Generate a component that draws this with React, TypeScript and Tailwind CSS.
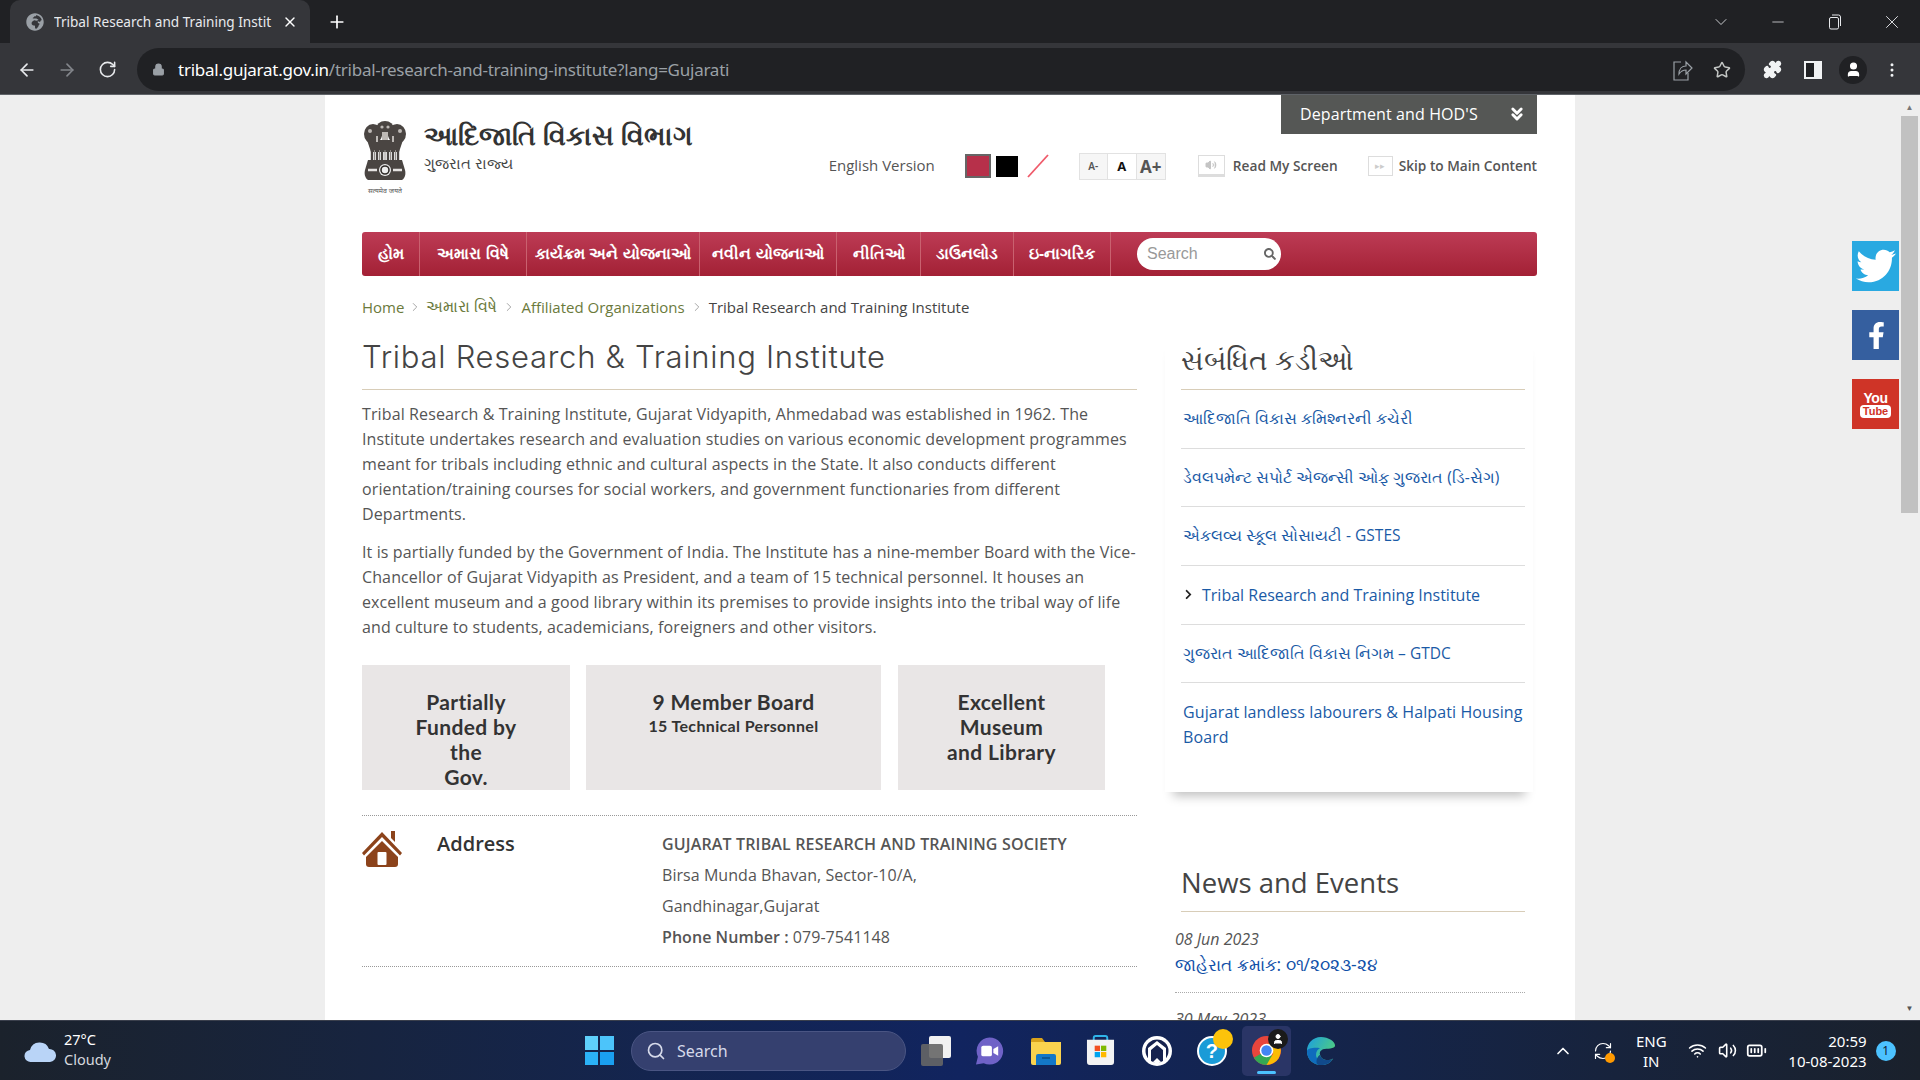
import React from "react";
import { ArrowLeft, ArrowRight, RotateCw, Lock, Star, Puzzle, MoreVertical, User, ChevronDown, Minus, X, Plus, Search, ChevronsDown, ChevronRight, Wifi, Volume2, BatteryFull, ChevronUp, RefreshCw } from "lucide-react";
import { FaTwitter, FaFacebookF, FaSearch, FaChevronRight, FaGlobeAfrica } from "react-icons/fa";

const navItems: [string, string][] = [
  ["હોમ", "w-[58px]"],
  ["અમારા વિષે", "w-[107px]"],
  ["કાર્યક્રમ અને યોજનાઓ", "w-[173px]"],
  ["નવીન યોજનાઓ", "w-[137px]"],
  ["નીતિઓ", "w-[84px]"],
  ["ડાઉનલોડ", "w-[93px]"],
  ["ઇ-નાગરિક", "w-[97px]"],
];

function Emblem() {
  return (
    <div className="w-[46px] h-[78px] flex flex-col items-center">
      <svg viewBox="0 0 46 66" className="w-[46px] h-[66px]">
        <g fill="#4a4542">
          <ellipse cx="11" cy="14" rx="9" ry="10" />
          <ellipse cx="35" cy="14" rx="9" ry="10" />
          <ellipse cx="23" cy="9" rx="9" ry="8" />
          <path d="M5 20h36l-4 12H9z" />
          <path d="M6 40h34l3 10c1 4 0 8-3 10H6c-3-2-4-6-3-10z" />
        </g>
        <g fill="#bdb9b5">
          <circle cx="8" cy="11" r="2" />
          <circle cx="38" cy="11" r="2" />
          <circle cx="20" cy="7" r="1.6" />
          <circle cx="26" cy="7" r="1.6" />
          <path d="M14 16h2v6h-2zM30 16h2v6h-2zM20 12h6v8h-6z" />
        </g>
        <g stroke="#4a4542" strokeWidth="2.4">
          <path d="M10 30v11M15 30v11M20 30v11M26 30v11M31 30v11M36 30v11" />
        </g>
        <g stroke="#8f8a86" strokeWidth="1">
          <path d="M12.5 30v10M17.5 30v10M23 30v10M28.5 30v10M33.5 30v10" />
        </g>
        <circle cx="23" cy="50" r="6" fill="#eee" />
        <circle cx="23" cy="50" r="4" fill="none" stroke="#2f2b28" strokeWidth="1.6" />
        <path d="M6 50h9M31 50h9" stroke="#e6e4e2" strokeWidth="2.4" />
      </svg>
      <div className="text-[7px] leading-[10px] text-[#555] whitespace-nowrap font-['Noto_Sans',sans-serif]">सत्यमेव जयते</div>
    </div>
  );
}

function Win11() {
  return (
    <div className="grid grid-cols-2 gap-[2px] w-[29px] h-[29px]">
      <div className="bg-[#5fd0fb]" />
      <div className="bg-[#4cc4fa]" />
      <div className="bg-[#2bb2f7]" />
      <div className="bg-[#1a9ff0]" />
    </div>
  );
}

function Chrome() {
  return (
    <svg viewBox="0 0 32 32" className="w-[31px] h-[31px]">
      <circle cx="16" cy="16" r="15" fill="#e8453c" />
      <path d="M16 16 3 23.5A15 15 0 0 0 16 31l7-8z" fill="#34a853" />
      <path d="M16 9h13a15 15 0 0 1-13 22l7-12z" fill="#fbbc05" />
      <circle cx="16" cy="16" r="7" fill="#fff" />
      <circle cx="16" cy="16" r="5.4" fill="#4285f4" />
    </svg>
  );
}

function Edge() {
  return (
    <svg viewBox="0 0 32 32" className="w-[30px] h-[30px]">
      <defs>
        <linearGradient id="edgeA" x1="0" y1="0" x2="1" y2="0.6">
          <stop offset="0" stopColor="#1b9de2" />
          <stop offset="1" stopColor="#52d17a" />
        </linearGradient>
      </defs>
      <path d="M16 1C7 1 1 8 1 16c0 9 7 15 15 15 6 0 11-3 13-7-5 3-13 2-14-4-1-3 1-5 3-6 4-1 13 0 13-4C31 6 24 1 16 1z" fill="url(#edgeA)" />
      <path d="M1 16c0 9 7 15 15 15 4 0 8-1 11-4-6 2-14 1-16-5-1-4 1-8 4-9-6-1-13 0-14 3z" fill="#0f6cbd" />
      <path d="M15 20c1 6 9 7 14 4-2 4-7 7-13 7-2 0-3 0-4-1-2-3 0-8 3-10z" fill="#114a8b" />
    </svg>
  );
}

function Meet() {
  return (
    <svg viewBox="0 0 30 30" className="w-[29px] h-[30px]">
      <path d="M15 1a14 14 0 1 1-6 26.6L1 29l2-8A14 14 0 0 1 15 1z" fill="#6f62c7" />
      <rect x="6.5" y="9.5" width="11" height="11" rx="2" fill="#fff" />
      <path d="m19 13 5-3v10l-5-3z" fill="#fff" />
    </svg>
  );
}

function Folder() {
  return (
    <svg viewBox="0 0 30 28" className="w-[30px] h-[28px]">
      <path d="M0 3a2 2 0 0 1 2-2h9l3 4H0z" fill="#d9a21b" />
      <path d="M0 5h30v21a2 2 0 0 1-2 2H2a2 2 0 0 1-2-2z" fill="#fbd34e" />
      <path d="M5 19a2 2 0 0 1 2-2h16a2 2 0 0 1 2 2v9H5z" fill="#1478c8" />
      <path d="M11 21h8" stroke="#0b4f8a" strokeWidth="1.5" />
    </svg>
  );
}

function Store() {
  return (
    <svg viewBox="0 0 30 32" className="w-[29px] h-[31px]">
      <path d="M8 7V3a2 2 0 0 1 2-2h10a2 2 0 0 1 2 2v4" fill="none" stroke="#2fb4e9" strokeWidth="2" />
      <path d="M1 5h28v23a3 3 0 0 1-3 3H4a3 3 0 0 1-3-3z" fill="#f3f3f3" />
      <rect x="9" y="11" width="5.5" height="5.5" fill="#f25022" />
      <rect x="15.5" y="11" width="5.5" height="5.5" fill="#7fba00" />
      <rect x="9" y="17.5" width="5.5" height="5.5" fill="#00a4ef" />
      <rect x="15.5" y="17.5" width="5.5" height="5.5" fill="#ffb900" />
    </svg>
  );
}

function HouseApp() {
  return (
    <svg viewBox="0 0 30 30" className="w-[30px] h-[30px]">
      <circle cx="15" cy="15" r="15" fill="#fff" />
      <circle cx="15" cy="15" r="11.5" fill="#16224f" />
      <path d="M6 12 15 5l9 7v13l-3 1V14l-6-5-6 5v12l-3-1z" fill="#fff" />
      <path d="m11 26 4-4 4 4-4 2z" fill="#fff" />
    </svg>
  );
}

function Help() {
  return (
    <div className="relative w-[30px] h-[30px]">
      <svg viewBox="0 0 30 30" className="w-[30px] h-[30px]">
        <circle cx="15" cy="15" r="14" fill="#1a9bd7" stroke="#fff" strokeWidth="2" />
      </svg>
      <span className="absolute inset-0 flex items-center justify-center text-white font-bold text-[20px] font-['Liberation_Sans',sans-serif]">?</span>
      <div className="absolute -right-[6px] -top-[7px] w-[20px] h-[20px] rounded-full bg-[#fcc30b]" />
    </div>
  );
}

function House() {
  return (
    <svg viewBox="0 0 40 38" className="w-[40px] h-[38px] shrink-0">
      <path d="M29 2h4v11l-4-4z" fill="#8c431b" />
      <path d="M20 3 0 24l2 2.5L20 8l18 18.5 2-2.5z" fill="#8c431b" />
      <path d="M20 12 4 28v7a3 3 0 0 0 3 3h26a3 3 0 0 0 3-3v-7z" fill="#8c431b" />
      <rect x="15.5" y="23" width="9" height="13" rx="1" fill="#fff" />
    </svg>
  );
}

export default function App() {
  return (
    <div className="h-screen w-full overflow-hidden flex flex-col bg-[#eeeeee] font-['Open_Sans','Noto_Sans',sans-serif] text-[#555]">
      {/* tab strip */}
      <div className="h-[43px] bg-[#202124] flex items-end shrink-0 text-white">
        <div className="ml-[10px] w-[300px] h-[43px] bg-[#35363a] rounded-t-[10px] flex items-center pl-[16px] pr-[12px]">
          <FaGlobeAfrica size={18} className="text-[#9aa0a6] shrink-0" />
          <span className="ml-[10px] text-[13.6px] leading-[20px] text-[#e8eaed] whitespace-nowrap overflow-hidden w-[219px] font-['Noto_Sans',sans-serif]">Tribal Research and Training Instit</span>
          <X size={16} className="ml-auto text-white" />
        </div>
        <div className="ml-[17px] h-[43px] flex items-center"><Plus size={20} /></div>
        <div className="ml-auto h-[43px] flex items-center text-[#e8eaed] -mt-[3px]">
          <div className="w-[57px] flex justify-center"><ChevronDown size={20} strokeWidth={1} /></div>
          <div className="w-[57px] flex justify-center"><Minus size={18} strokeWidth={1} /></div>
          <div className="w-[57px] flex justify-center">
            <svg width="14" height="16" viewBox="0 0 14 16" fill="none" stroke="currentColor"><rect x="1.5" y="3.5" width="9" height="11.5" rx="1.5" /><path d="M4 1h6.5a2 2 0 0 1 2 2v9" /></svg>
          </div>
          <div className="w-[57px] flex justify-center"><X size={22} strokeWidth={1} /></div>
        </div>
      </div>
      {/* toolbar */}
      <div className="h-[52px] bg-[#35363a] shrink-0 flex items-center border-b border-[#5f6368] pt-[2px]">
        <ArrowLeft size={20} className="ml-[17px] text-[#e8eaed]" />
        <ArrowRight size={20} className="ml-[20px] text-[#83868b]" />
        <RotateCw size={19} className="ml-[21px] text-[#e8eaed]" />
        <div className="ml-[20px] w-[1608px] h-[43px] rounded-full bg-[#202124] flex items-center pl-[15px] pr-[14px]">
          <Lock size={13} fill="#9aa0a6" className="text-[#9aa0a6]" />
          <span className="ml-[13px] text-[17px] tracking-[-0.25px] whitespace-nowrap font-['Noto_Sans',sans-serif] text-white">tribal.gujarat.gov.in<span className="text-[#9aa0a6]">/tribal-research-and-training-institute?lang=Gujarati</span></span>
          <svg width="20" height="22" viewBox="0 0 20 22" fill="none" stroke="#9aa0a6" strokeWidth="1.2" className="ml-auto mr-[20px]">
            <path d="M8 3H1v18h14v-7" />
            <path d="M6 15c0-5 3-8 7-8V3l6 6-6 6v-4c-3 0-5 1-7 4z" />
          </svg>
          <Star size={18} className="text-[#c4c7c5]" />
        </div>
        <Puzzle size={19} fill="#f1f3f4" className="ml-[18px] text-[#f1f3f4]" />
        <div className="ml-[22px] w-[18px] h-[18px] border-2 border-r-[8px] border-[#f1f3f4] bg-[#202124]" />
        <div className="ml-[17px] w-[28px] h-[28px] rounded-full bg-[#202124] flex items-center justify-center"><User size={17} fill="#fff" className="text-white" /></div>
        <MoreVertical size={18} className="ml-[16px] text-[#f1f3f4]" />
      </div>

      {/* viewport */}
      <div className="flex-1 min-h-0 flex relative overflow-hidden">
        <div className="w-[325px] shrink-0" />
        <div className="w-[1250px] shrink-0 bg-white pl-[37px] pr-[38px] overflow-hidden">
          {/* header */}
          <div className="h-[137px] flex">
            <div className="pt-[25px]"><Emblem /></div>
            <div className="ml-[16px] pt-[21px]">
              <div className="text-[27.3px] font-bold leading-[38px] text-[#333]">આદિજાતિ વિકાસ વિભાગ</div>
              <div className="text-[15px] leading-[18px] text-[#444]">ગુજરાત રાજ્ય</div>
            </div>
            <div className="ml-auto flex flex-col items-end">
              <div className="w-[256px] h-[39px] bg-[#555755] flex items-center pl-[19px] pr-[10px] text-white text-[16px] tracking-[0.1px] pb-[2px]">
                Department and HOD'S
                <ChevronsDown size={20} strokeWidth={3.5} className="ml-auto" />
              </div>
              <div className="mt-[18px] flex items-center h-[28px] text-[14px]">
                <span className="text-[15px] -mt-[1px] mr-[-1px]">English Version</span>
                <div className="ml-[31px] w-[26px] h-[24px] bg-[#b7304a] border-2 border-[#666]" />
                <div className="ml-[5px] w-[22px] h-[21px] bg-black" />
                <svg width="24" height="24" viewBox="0 0 24 24" className="ml-[8px]"><path d="M2 23 22 1" stroke="#ef5a6a" strokeWidth="1.8" /></svg>
                <div className="ml-[29px] flex items-stretch h-[27px] border border-[#e2e2e2] font-['Noto_Sans',sans-serif] divide-x divide-[#e2e2e2]">
                  <span className="w-[28px] text-center text-[10px] font-semibold bg-[#f6f6f6] leading-[25px]">A-</span>
                  <span className="w-[29px] text-center text-[13px] font-bold text-[#111] leading-[25px]">A</span>
                  <span className="w-[28px] text-center text-[17px] font-bold bg-[#f6f6f6] leading-[25px]">A+</span>
                </div>
                <div className="ml-[32px] w-[27px] h-[22px] border border-[#ddd] border-b-[3px] flex items-center justify-center text-[#c4c4c4]"><Volume2 size={12} fill="#c4c4c4" /></div>
                <span className="ml-[8px] font-semibold text-[13.7px]">Read My Screen</span>
                <div className="ml-[30px] w-[25px] h-[20px] border border-[#ddd] text-[#ccc] text-[9px] flex items-center justify-center">▸▸</div>
                <span className="ml-[6px] font-semibold text-[13.7px]">Skip to Main Content</span>
              </div>
            </div>
          </div>
          {/* nav */}
          <div className="h-[44px] rounded-[3px] bg-gradient-to-b from-[#bd3b55] to-[#a32035] flex items-center text-white font-bold text-[15.5px]">
            {navItems.map(([n, w]) => (
              <div key={n} className={`${w} h-full flex items-center justify-center border-r border-[#c9616f] whitespace-nowrap`}>{n}</div>
            ))}
            <div className="ml-[26px] w-[144px] h-[32px] rounded-full bg-white flex items-center pl-[10px] pr-[5px] font-normal text-[16px] text-[#999] font-['Liberation_Sans',sans-serif]">
              Search
              <FaSearch size={12} className="ml-auto text-[#666]" />
            </div>
          </div>
          {/* breadcrumb */}
          <div className="mt-[19px] h-[24px] flex items-center text-[15px] text-[#6b7a3c]">
            <span>Home</span><ChevronRight size={14} strokeWidth={1.5} className="mx-[4px] text-[#999]" />
            <span className="text-[15.5px]">અમારા વિષે</span><ChevronRight size={14} strokeWidth={1.5} className="mx-[5px] text-[#999]" />
            <span>Affiliated Organizations</span><ChevronRight size={14} strokeWidth={1.5} className="mx-[5px] text-[#999]" />
            <span className="text-[#444]">Tribal Research and Training Institute</span>
          </div>
          <div className="flex mt-[19px]">
            {/* main */}
            <div className="w-[775px] shrink-0">
              <h1 className="h-[52px] border-b border-[#d8cdb8] text-[31px] leading-[38px] text-[#444] font-['Inter',sans-serif] font-light tracking-[0.72px]">Tribal Research &amp; Training Institute</h1>
              <div className="mt-[12px] text-[16px] leading-[25px] tracking-[0.115px]">
                <p className="mb-[13px]">Tribal Research &amp; Training Institute, Gujarat Vidyapith, Ahmedabad was established in 1962. The Institute undertakes research and evaluation studies on various economic development programmes meant for tribals including ethnic and cultural aspects in the State. It also conducts different orientation/training courses for social workers, and government functionaries from different Departments.</p>
                <p>It is partially funded by the Government of India. The Institute has a nine-member Board with the Vice-Chancellor of Gujarat Vidyapith as President, and a team of 15 technical personnel. It houses an excellent museum and a good library within its premises to provide insights into the tribal way of life and culture to students, academicians, foreigners and other visitors.</p>
              </div>
              <div className="mt-[25px] flex h-[125px] text-center text-[#333] font-['Lato',sans-serif] font-bold text-[21px] tracking-[0.35px] leading-[25px]">
                <div className="w-[208px] bg-[#e9e6e6] pt-[24px]">Partially<br />Funded by<br />the<br />Gov.</div>
                <div className="ml-[16px] w-[295px] bg-[#e9e6e6] pt-[24px]">9 Member Board<div className="text-[16px] leading-[23px]">15 Technical Personnel</div></div>
                <div className="ml-[17px] w-[207px] bg-[#e9e6e6] pt-[24px]">Excellent<br />Museum<br />and Library</div>
              </div>
              <div className="mt-[25px] border-t border-b border-dotted border-[#999] h-[152px] flex pt-[13px]">
                <House />
                <div className="ml-[35px] w-[225px] text-[20px] font-semibold text-[#333] leading-[28px] mt-[1px]">Address</div>
                <div className="text-[16px] leading-[31px] tracking-[0.05px]">
                  <div className="font-semibold tracking-[0.15px]">GUJARAT TRIBAL RESEARCH AND TRAINING SOCIETY</div>
                  <div>Birsa Munda Bhavan, Sector-10/A,</div>
                  <div>Gandhinagar,Gujarat</div>
                  <div><span className="font-semibold">Phone Number :</span> 079-7541148</div>
                </div>
              </div>
            </div>
            {/* sidebar */}
            <div className="ml-[28px] w-[368px] shrink-0 -mt-[3px]">
              <div className="pl-[16px] pr-[8px] pb-[42px] shadow-[0_12px_10px_-8px_rgba(0,0,0,0.25)]">
                <div className="h-[55px] border-b border-[#d8cdb8] text-[28px] leading-[48px] text-[#444]">સંબંધિત કડીઓ</div>
                <div className="text-[15.5px] text-[#1a5aa6]">
                  {["આદિજાતિ વિકાસ કમિશ્નરની કચેરી", "ડેવલપમેન્ટ સપોર્ટ એજન્સી ઓફ ગુજરાત (ડિ-સેગ)", "એકલવ્ય સ્કૂલ સોસાયટી - GSTES"].map((t) => (
                    <div key={t} className="h-[58.5px] flex items-center border-b border-[#ddd] pl-[2px] whitespace-nowrap">{t}</div>
                  ))}
                  <div className="h-[59px] flex items-center border-b border-[#ddd] pl-[2px] text-[16px]"><FaChevronRight size={11} className="text-[#222] mr-[8px]" />Tribal Research and Training Institute</div>
                  <div className="h-[58.5px] flex items-center border-b border-[#ddd] pl-[2px] whitespace-nowrap">ગુજરાત આદિજાતિ વિકાસ નિગમ – GTDC</div>
                  <div className="pt-[17px] pl-[2px] text-[16px] leading-[25px] tracking-[0.1px]">Gujarat landless labourers &amp; Halpati Housing Board</div>
                </div>
              </div>
              <div className="mt-[71px] pl-[10px] pr-[8px]">
                <div className="ml-[6px] h-[49px] border-b border-[#d8cdb8] text-[27.5px] leading-[40px] text-[#444]">News and Events</div>
                <div className="pt-[15px] h-[81px] border-b border-dotted border-[#aaa]">
                  <div className="italic text-[16px] leading-[24px]">08 Jun 2023</div>
                  <div className="text-[17.4px] leading-[26px] text-[#0f4fa8]">જાહેરાત ક્રમાંક: ૦૧/૨૦૨૩-૨૪</div>
                </div>
                <div className="italic text-[16px] leading-[24px] mt-[14px]">30 May 2023</div>
              </div>
            </div>
          </div>
        </div>
        {/* right gutter */}
        <div className="flex-1 relative">
          <div className="absolute right-[2px] top-0 bottom-0 w-[17px] flex flex-col items-center">
            <div className="h-[21px] pt-[3px] text-[8px] text-[#777] leading-[17px]">▲</div>
            <div className="w-full h-[397px] bg-[#c1c1c1]" />
            <div className="mt-auto mb-[4px] h-[17px] text-[8px] text-[#555] leading-[17px]">▼</div>
          </div>
          <div className="absolute left-[277px] top-[146px] flex flex-col gap-[19px]">
            <div className="w-[47px] h-[50px] bg-[#29a9e1] flex items-center justify-center"><FaTwitter size={40} className="text-white" /></div>
            <div className="w-[47px] h-[50px] bg-[#355f9f] flex items-center justify-center"><FaFacebookF size={27} className="text-white ml-[2px]" /></div>
            <div className="w-[47px] h-[50px] bg-[#cf3427] flex flex-col items-center justify-center text-white font-bold font-['Liberation_Sans',sans-serif]">
              <span className="text-[14px] leading-[14px] tracking-[-0.5px]">You</span>
              <span className="text-[#cf3427] bg-white rounded-[4px] px-[3px] text-[11px] leading-[13px]">Tube</span>
            </div>
          </div>
        </div>
      </div>

      {/* taskbar */}
      <div className="h-[60px] shrink-0 border-t border-[#3a3f4c] bg-gradient-to-r from-[#1b222c] via-[#11245f] to-[#1a212c] flex items-center text-white font-['Noto_Sans',sans-serif]">
        <svg width="32" height="24" viewBox="0 0 32 24" className="ml-[24px]"><path d="M7 23a6 6 0 0 1-1-12 10 10 0 0 1 19-1 6.5 6.5 0 0 1 1 13z" fill="#b9d4f7" /></svg>
        <div className="ml-[8px] text-[14.5px] leading-[20px] -mt-[3px]"><div>27°C</div><div className="text-[#d5d8de]">Cloudy</div></div>
        <div className="ml-[474px]"><Win11 /></div>
        <div className="ml-[17px] w-[275px] h-[40px] rounded-full bg-[#35406f] border border-[#4a5583] flex items-center pl-[14px] text-[#d6daea] text-[16px]">
          <Search size={20} className="mr-[11px]" />Search
        </div>
        <div className="ml-[15px] relative w-[30px] h-[30px]">
          <div className="absolute left-[8px] top-0 w-[22px] h-[22px] bg-[#f1f1f1] rounded-[2px]" />
          <div className="absolute left-0 top-[8px] w-[22px] h-[22px] bg-[#666] opacity-90 rounded-[2px]" />
        </div>
        <div className="ml-[24px]"><Meet /></div>
        <div className="ml-[27px]"><Folder /></div>
        <div className="ml-[25px]"><Store /></div>
        <div className="ml-[27px]"><HouseApp /></div>
        <div className="ml-[25px]"><Help /></div>
        <div className="ml-[15px] relative w-[49px] h-[50px] rounded-[5px] bg-[#2a3566] flex items-center justify-center">
          <Chrome />
          <div className="absolute right-[3px] top-[3px] w-[20px] h-[20px] rounded-full bg-[#1a1a1a] flex items-center justify-center"><User size={12} fill="#fff" /></div>
          <div className="absolute bottom-[2px] left-[15px] w-[19px] h-[3px] rounded-full bg-[#4cc2ff]" />
        </div>
        <div className="ml-[15px]"><Edge /></div>
        <ChevronUp size={20} className="ml-[217px]" />
        <div className="ml-[20px] relative"><RefreshCw size={20} strokeWidth={1.4} /><div className="absolute right-[-2px] bottom-[-2px] w-[10px] h-[10px] rounded-full bg-[#f90]" /></div>
        <div className="ml-[23px] text-[15px] leading-[20px] text-center"><div>ENG</div><div>IN</div></div>
        <Wifi size={19} className="ml-[21px]" />
        <Volume2 size={19} className="ml-[11px]" />
        <BatteryFull size={21} className="ml-[9px]" />
        <div className="ml-[18px] text-[15px] leading-[20px] text-right w-[82px]"><div>20:59</div><div>10-08-2023</div></div>
        <div className="ml-[9px] w-[20px] h-[20px] rounded-full bg-[#4cc2ff] text-[#123] text-[12px] flex items-center justify-center">1</div>
      </div>
    </div>
  );
}
